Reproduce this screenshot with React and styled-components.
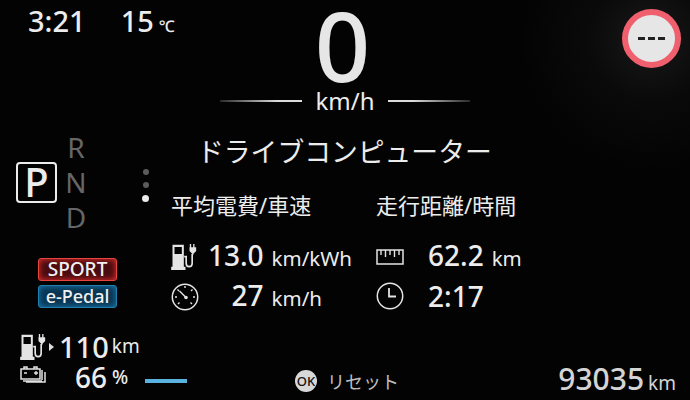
import React from "react"
import styled, { createGlobalStyle } from 'styled-components'

const GlobalStyle = createGlobalStyle`
  html, body { margin: 0; padding: 0; background: #020203; }
  body { font-family: "Noto Sans", "Noto Sans CJK JP", sans-serif; color: #ececec; }
`

const Screen = styled.div`
  width: 690px;
  height: 400px;
  overflow: hidden;
  background: radial-gradient(circle at 650px 40px, #191919 0, #0a0a0a 60px, #030304 130px);
  display: flex;
  flex-direction: column;
`

const TopBar = styled.header`
  height: 114px;
  display: grid;
  grid-template-columns: 220px 250px 1fr;
`

const Clock = styled.div`
  padding: 0 0 0 28px;
  display: flex;
  align-items: baseline;
  height: 40px;
`

const BigText = styled.span`
  font-size: ${({ $size }) => $size}px;
  font-weight: ${({ $weight }) => $weight || 500};
  line-height: ${({ $line }) => $line || 41}px;
  margin-left: ${({ $left }) => $left || 0}px;
  color: ${({ $color }) => $color || '#ececec'};
  white-space: nowrap;
`

const Speedo = styled.div`
  display: flex;
  flex-direction: column;
  align-items: center;
`

const SpeedValue = styled.div`
  font-size: 97px;
  font-weight: 500;
  line-height: 88px;
  padding-right: 5px;
  color: #e6e6e6;
`

const SpeedUnitRow = styled.div`
  width: 250px;
  display: flex;
  align-items: center;
  gap: 13px;
  line-height: 26px;
  font-size: 24px;
`

const FadeLine = styled.i`
  display: block;
  flex: 1;
  height: 2px;
  background: linear-gradient(${({ $dir }) => $dir}, #dcdcdc 30%, #2a2a2a);
`

const LimitSlot = styled.div`
  display: flex;
  justify-content: flex-end;
  padding: 9px 9px 0 0;
`

const LimitSign = styled.div`
  width: 47px;
  height: 47px;
  border-radius: 50%;
  border: 6px solid #ef5f6e;
  background: #e6e6e6;
  display: flex;
  align-items: center;
  justify-content: center;
  gap: 3px;
`

const LimitDash = styled.i`
  display: block;
  width: 7px;
  height: 3px;
  background: #222;
`

const Body = styled.main`
  height: 218px;
  display: flex;
`

const Side = styled.section`
  width: 171px;
  flex: none;
  padding-left: 16px;
  box-sizing: border-box;
`

const GearRow = styled.div`
  display: flex;
  align-items: center;
  height: 124px;
  padding-top: 12px;
  box-sizing: border-box;
`

const ParkBox = styled.div`
  width: 41px;
  height: 41px;
  box-sizing: border-box;
  border: 2px solid #ececec;
  border-radius: 4px;
  display: flex;
  align-items: center;
  justify-content: center;
  font-size: 40px;
  font-weight: 500;
  line-height: 1;
`

const GearList = styled.div`
  margin-left: 9px;
  width: 20px;
  display: flex;
  flex-direction: column;
  align-items: center;
  gap: 7px;
  font-size: 28px;
  line-height: 28px;
  color: #666;
`

const Dots = styled.div`
  margin: 6px 0 0 56px;
  display: flex;
  flex-direction: column;
  align-items: center;
  gap: 7px;
`

const Dot = styled.i`
  display: block;
  width: ${({ $on }) => ($on ? 7 : 6)}px;
  height: ${({ $on }) => ($on ? 7 : 6)}px;
  border-radius: 50%;
  background: ${({ $on }) => ($on ? '#ececec' : '#5c5c5c')};
`

const Badges = styled.div`
  margin: 20px 0 0 22px;
  display: flex;
  flex-direction: column;
  gap: 4px;
  width: 79px;
`

const Badge = styled.div`
  height: 23px;
  box-sizing: border-box;
  border-radius: 3px;
  text-align: center;
  font-size: ${({ $kind }) => ($kind === 'sport' ? 19 : 18)}px;
  font-weight: 500;
  line-height: 21px;
  color: #f0f0f0;
  border: 1px solid ${({ $kind }) => ($kind === 'sport' ? '#e8453f' : '#1f7fb0')};
  background: ${({ $kind }) => ($kind === 'sport' ? '#4a0c10' : '#0a3552')};
  box-shadow: inset 0 0 6px ${({ $kind }) => ($kind === 'sport' ? '#f03030' : '#1a80b8')};
`

const Computer = styled.section`
  flex: 1;
  display: flex;
  flex-direction: column;
`

const Title = styled.h1`
  margin: 19px 0 0 26px;
  font-family: "Noto Sans CJK JP", sans-serif;
  font-size: 26.8px;
  font-weight: 400;
  line-height: 36px;
  white-space: nowrap;
`

const Stats = styled.div`
  margin-top: 21px;
  display: grid;
  grid-template-columns: 205px 1fr;
`

const StatColumn = styled.div`
  display: flex;
  flex-direction: column;
`

const StatTitle = styled.h2`
  margin: 0 0 16px;
  font-family: "Noto Sans", "Noto Sans CJK JP", sans-serif;
  font-size: 22px;
  font-weight: 400;
  line-height: 30px;
  white-space: nowrap;
`

const StatRow = styled.div`
  height: 40px;
  display: grid;
  grid-template-columns: ${({ $value }) => $value};
  align-items: center;
`

const Reading = styled.div`
  justify-self: end;
  display: flex;
  align-items: baseline;
  gap: 8px;
  white-space: nowrap;
`

const ReadingStart = styled(Reading)`
  justify-self: start;
`

const Value = styled.span`
  font-size: 28px;
  font-weight: 500;
  line-height: 38px;
`

const Unit = styled.span`
  font-size: 20.5px;
  line-height: 38px;
`

const BottomBar = styled.footer`
  flex: 1;
  display: grid;
  grid-template-columns: 275px 1fr auto;
  align-items: end;
  padding: 0 14px 7px 20px;
`

const Range = styled.div`
  display: flex;
  flex-direction: column;
`

const RangeRow = styled.div`
  display: flex;
  align-items: center;
  height: 31px;
`

const Pointer = styled.i`
  width: 0;
  height: 0;
  margin: 0 5px 0 2px;
  border-left: 5px solid #dedede;
  border-top: 4px solid transparent;
  border-bottom: 4px solid transparent;
`

const ChargeBar = styled.i`
  display: block;
  width: 42px;
  height: 4px;
  margin: 7px 0 0 17px;
  background: #5ab2e0;
`

const ResetHint = styled.div`
  display: flex;
  align-items: center;
  gap: 10px;
  height: 24px;
  font-family: "Noto Sans CJK JP", sans-serif;
  font-size: 18px;
  color: #bdbdbd;
`

const OkKey = styled.span`
  width: 22px;
  height: 22px;
  border-radius: 50%;
  background: #d8d8d8;
  color: #111;
  font: 500 13px/22px "Noto Sans", sans-serif;
  text-align: center;
`

const Odometer = styled.div`
  display: flex;
  align-items: baseline;
  gap: 4px;
  line-height: 30px;
  margin-bottom: -5px;
`

const Svg = ({ w, h, children, box }) => (
  <svg width={w} height={h} viewBox={box} fill="none" stroke="#e4e4e4" style={{ flex: 'none' }}>
    {children}
  </svg>
)

const FuelPlugIcon = () => (
  <Svg w={27} h={26} box="0 0 80 78">
    <path
      fillRule="evenodd"
      stroke="none"
      fill="#e4e4e4"
      d="M4 2h34v66h5v10H0V68h4zM10 9v21h22V9z"
    />
    <path fill="#e4e4e4" stroke="none" d="M56 0h4v10h6V0h4v10h5v11l-8 8v3h-4v-3l-8-8V10h1z" />
    <path strokeWidth="5" d="M63 30v28q0 10-9 10t-9-10V38h-6" />
  </Svg>
)

const GaugeIcon = () => (
  <Svg w={28} h={28} box="0 0 28 28">
    <circle cx="14" cy="14" r="12.7" strokeWidth="1.5" />
    <path strokeWidth="1.4" d="M14 3v2M4 14h2M22 14h2M6.5 6.5l1.5 1.5M21.5 6.5l-1.5 1.5M7 21l1.5-1.5M21 21l-1.5-1.5" />
    <path strokeWidth="1.4" d="M8.5 8l6 6" />
    <circle cx="15" cy="14.5" r="1.8" fill="#e4e4e4" stroke="none" />
  </Svg>
)

const RulerIcon = () => (
  <Svg w={28} h={16} box="0 0 28 16">
    <rect x="1" y="1" width="26" height="14" strokeWidth="1.5" />
    <path strokeWidth="1.4" d="M5 1v5M9.5 1v7M14 1v5M18.5 1v7M23 1v5" />
  </Svg>
)

const ClockIcon = () => (
  <Svg w={28} h={28} box="0 0 28 28">
    <circle cx="14" cy="14" r="12.7" strokeWidth="1.5" />
    <path strokeWidth="1.8" d="M13 6v8.5h7" />
  </Svg>
)

const BatteryIcon = () => (
  <Svg w={28} h={24} box="0 0 28 24">
    <path strokeWidth="1.5" d="M1 3h19v10H1zM4 3V1h3v2M14 3V1h3v2" />
    <path strokeWidth="1.3" d="M4 7h3M14 7h4M16 5v4" />
    <path strokeWidth="1.5" d="M22 4v10M3 15h19M25 6v10H6" />
  </Svg>
)

const App = () => {
  return (
    <Screen>
      <GlobalStyle />
      <TopBar>
        <Clock>
          <BigText $size={29}>3:21</BigText>
          <BigText $size={29} $left={35}>15</BigText>
          <BigText $size={16} $left={5}>℃</BigText>
        </Clock>
        <Speedo>
          <SpeedValue>0</SpeedValue>
          <SpeedUnitRow>
            <FadeLine $dir="to left" />
            km/h
            <FadeLine $dir="to right" />
          </SpeedUnitRow>
        </Speedo>
        <LimitSlot>
          <LimitSign>
            <LimitDash />
            <LimitDash />
            <LimitDash />
          </LimitSign>
        </LimitSlot>
      </TopBar>
      <Body>
        <Side>
          <GearRow>
            <ParkBox>P</ParkBox>
            <GearList>
              <span>R</span>
              <span>N</span>
              <span>D</span>
            </GearList>
            <Dots>
              <Dot />
              <Dot />
              <Dot $on />
            </Dots>
          </GearRow>
          <Badges>
            <Badge $kind="sport">SPORT</Badge>
            <Badge $kind="pedal">e-Pedal</Badge>
          </Badges>
        </Side>
        <Computer>
          <Title>ドライブコンピューター</Title>
          <Stats>
            <StatColumn>
              <StatTitle>平均電費/車速</StatTitle>
              <StatRow $value="27px 154px">
                <FuelPlugIcon />
                <Reading>
                  <Value>13.0</Value>
                  <Unit>km/kWh</Unit>
                </Reading>
              </StatRow>
              <StatRow $value="28px 123px">
                <GaugeIcon />
                <Reading>
                  <Value>27</Value>
                  <Unit>km/h</Unit>
                </Reading>
              </StatRow>
            </StatColumn>
            <StatColumn>
              <StatTitle>走行距離/時間</StatTitle>
              <StatRow $value="52px 1fr">
                <RulerIcon />
                <ReadingStart>
                  <Value>62.2</Value>
                  <Unit>km</Unit>
                </ReadingStart>
              </StatRow>
              <StatRow $value="52px 1fr">
                <ClockIcon />
                <ReadingStart>
                  <Value>2:17</Value>
                </ReadingStart>
              </StatRow>
            </StatColumn>
          </Stats>
        </Computer>
      </Body>
      <BottomBar>
        <Range>
          <RangeRow>
            <FuelPlugIcon />
            <Pointer />
            <BigText $size={29} $line={31}>110</BigText>
            <BigText $size={19} $line={31} $left={3} $weight={400}>km</BigText>
          </RangeRow>
          <RangeRow>
            <BatteryIcon />
            <BigText $size={28} $line={31} $left={27}>66</BigText>
            <BigText $size={19} $line={31} $left={5}>%</BigText>
            <ChargeBar />
          </RangeRow>
        </Range>
        <ResetHint>
          <OkKey>OK</OkKey>
          リセット
        </ResetHint>
        <Odometer>
          <BigText $size={30} $line={30} $color="#d4d4d4">93035</BigText>
          <BigText $size={19} $line={30} $weight={400} $color="#d4d4d4">km</BigText>
        </Odometer>
      </BottomBar>
    </Screen>
  )
}

export default App
